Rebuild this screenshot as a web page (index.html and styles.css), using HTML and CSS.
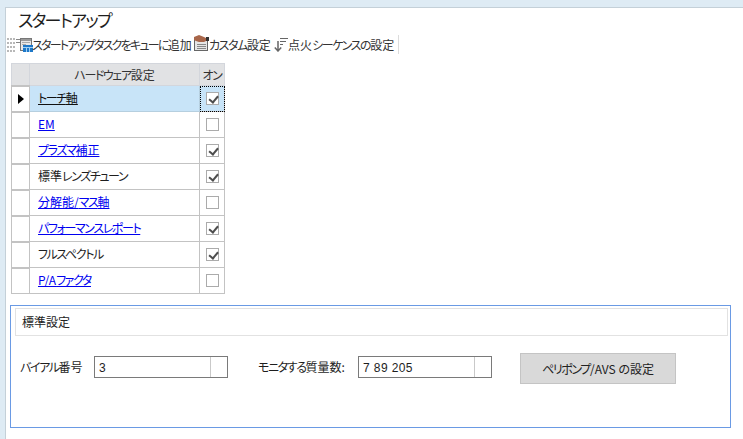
FILE: index.html
```html
<!DOCTYPE html>
<html lang="ja">
<head>
<meta charset="utf-8">
<title>スタートアップ</title>
<link rel="stylesheet" href="styles.css">
</head>
<body>
<main class="page">
  <h1 class="title">スタートアップ</h1>
  <div class="toolbar">
    <svg class="grip" width="13" height="18" viewBox="0 0 13 18"><g fill="#b8b8b8"><rect x="0" y="2" width="2" height="2"/><rect x="3" y="2" width="2" height="2"/><rect x="6" y="2" width="2" height="2"/><rect x="0" y="6" width="2" height="2"/><rect x="3" y="6" width="2" height="2"/><rect x="6" y="6" width="2" height="2"/><rect x="0" y="10" width="2" height="2"/><rect x="3" y="10" width="2" height="2"/><rect x="6" y="10" width="2" height="2"/><rect x="0" y="14" width="2" height="2"/><rect x="3" y="14" width="2" height="2"/><rect x="6" y="14" width="2" height="2"/></g><path d="M9 3.500h4M9 6.500h4" stroke="#888" stroke-width="1"/></svg>
    <svg class="ico-queue" width="13" height="14" viewBox="0 0 13 14"><rect x=".5" y=".5" width="11" height="12" fill="#e8e8e8" stroke="#777"/><rect x="1" y="1" width="10" height="2" fill="#999"/><path d="M2 4.500h8M2 6.500h4" stroke="#aaa"/><rect x="3" y="7" width="10" height="7" fill="#1e78c8"/><path d="M3 9.500h10M6.500 9v5M9.500 9v5" stroke="#9fd0f5"/></svg>
    <span class="tool tool-queue"><span class="k">スタートアップタスクをキューに</span>追加</span>
    <svg class="ico-custom" width="15" height="16" viewBox="0 0 15 16"><rect x=".5" y="4.500" width="13" height="11" fill="#e6e6e6" stroke="#666"/><path d="M3 9.500h9M3 11.500h9M3 13.500h9" stroke="#888"/><path d="M0 2l5-2 5 2 2 1v3l-2 1H5L2 6 0 5z" fill="#a8664a"/><rect x="12" y="2" width="3" height="4" fill="#333"/></svg>
    <span class="tool tool-custom"><span class="k">カスタム</span>設定</span>
    <svg class="ico-sort" width="14" height="14" viewBox="0 0 14 14"><path d="M4 3v10M.8 9.500L4 13l3.200-3.500" fill="none" stroke="#666" stroke-width="1.500"/><path d="M6 .5h8M6 3.500h6M6 6.500h3" stroke="#666"/></svg>
    <span class="tool tool-seq">点火<span class="k">シーケンスの</span>設定</span>
  </div>
  <table class="grid">
    <thead>
      <tr><th class="rh"></th><th class="name"><span class="k">ハードウェア</span>設定</th><th class="on"><span class="k">オン</span></th></tr>
    </thead>
    <tbody>
      <tr class="selected"><td class="rh"><span class="arrow"></span></td><td class="name"><a class="link-current" href="#"><span class="k">トーチ</span>軸</a></td><td class="on current"><span class="check checked"></span></td></tr>
      <tr><td class="rh"></td><td class="name"><a href="#">EM</a></td><td class="on"><span class="check"></span></td></tr>
      <tr><td class="rh"></td><td class="name"><a href="#"><span class="k">プラズマ</span>補正</a></td><td class="on"><span class="check checked"></span></td></tr>
      <tr><td class="rh"></td><td class="name">標準<span class="k">レンズチューン</span></td><td class="on"><span class="check checked"></span></td></tr>
      <tr><td class="rh"></td><td class="name"><a href="#">分解能/<span class="k">マス</span>軸</a></td><td class="on"><span class="check"></span></td></tr>
      <tr><td class="rh"></td><td class="name"><a href="#"><span class="k">パフォーマンスレポート</span></a></td><td class="on"><span class="check checked"></span></td></tr>
      <tr><td class="rh"></td><td class="name"><span class="k">フルスペクトル</span></td><td class="on"><span class="check checked"></span></td></tr>
      <tr><td class="rh"></td><td class="name"><a href="#">P/A<span class="k">ファクタ</span></a></td><td class="on"><span class="check"></span></td></tr>
    </tbody>
  </table>
  <section class="group">
    <div class="group-head">標準設定</div>
    <div class="group-body">
      <label class="lbl lbl-vial"><span class="k">バイアル</span>番号</label>
      <div class="field"><span class="val">3</span><span class="spin"></span></div>
      <label class="lbl lbl-mass"><span class="k">モニタする</span>質量数:</label>
      <div class="field"><span class="val">7 89 205</span><span class="spin"></span></div>
      <button class="btn" type="button"><span class="k">ペリポンプ</span>/AVS の設定</button>
    </div>
  </section>
</main>
</body>
</html>
```
FILE: styles.css
```css
* { box-sizing: border-box; }
html, body { margin: 0; height: 100%; overflow: hidden; }
body {
  display: flex;
  background: #deebf4;
  padding: 7px 0 0 5px;
  font-family: "Noto Sans CJK JP", "Liberation Sans", sans-serif;
  font-size: 12px;
  color: #1e1e1e;
  font-feature-settings: "palt";
}
.k { letter-spacing: -1.4px; }
.page {
  flex: 1;
  min-width: 0;
  overflow: hidden;
  background: #fff;
  border-top: 1px solid #c4d0d8;
  border-left: 1px solid #c4d0d8;
  padding-left: 4px;
}
.title {
  margin: 0 0 0 8px;
  height: 26px;
  font-size: 17px;
  font-weight: 400;
  line-height: 24px;
  letter-spacing: -1.7px;
}
.toolbar {
  display: flex;
  align-items: center;
  height: 19px;
  margin-top: 1px;
  width: 392px;
  margin-left: -3px;
  border-right: 1px solid #dcdcdc;
  color: #333;
}
.toolbar svg { flex: none; }
.tool { flex: none; line-height: 18px; white-space: nowrap; }
.tool-queue { width: 156px; margin-left: -1px; }
.tool-queue .k { letter-spacing: -1.75px; }
.ico-custom { margin-left: 6px; margin-top: -3px; }
.tool-custom { width: 60px; letter-spacing: -.3px; }
.ico-sort { margin-left: 5px; }
.tool-seq { width: 105px; }

.grid {
  margin: 9px 0 0 1px;
  border-collapse: collapse;
  table-layout: fixed;
  width: 213px;
}
.grid th, .grid td { border: 1px solid #c3c3c3; padding: 0; height: 26px; }
.grid th {
  background: #e1e2e4;
  border-color: #d3d6dc;
  height: 22px;
  font-weight: 400;
  color: #333;
  line-height: 18px;
}
.grid .rh { width: 18px; }
.grid td.rh { border-top-width: 2px; text-align: center; }
.grid .on { width: 25px; text-align: center; }
.grid th.name { width: 170px; text-align: center; }
.grid td.name { padding: 0 0 2px 8px; line-height: 22px; }
.grid a { color: #0000f0; text-decoration: underline; }
.grid a.link-current { color: #111; }
.selected td.name, .selected td.on { background: #c8e4f8; }
.selected td.name { border-color: #b6cfdf; }
.arrow {
  display: block;
  width: 0;
  height: 0;
  margin: 0 auto 0 6px;
  border-left: 6px solid #000;
  border-top: 5px solid transparent;
  border-bottom: 5px solid transparent;
}
.current { outline: 1px dotted #000; outline-offset: -1px; }
.check {
  display: block;
  position: relative;
  width: 13px;
  height: 13px;
  margin: -1px auto 0;
  border: 1px solid #ababab;
  background: #fff;
}
.checked::after {
  content: "";
  position: absolute;
  left: 2px;
  top: 1px;
  width: 7px;
  height: 4px;
  border-left: 2px solid #4d4d4d;
  border-bottom: 2px solid #4d4d4d;
  transform: rotate(-50deg) translate(-1px, 1px);
}

.group {
  margin-top: 11px;
  width: 721px;
  height: 123px;
  border: 1px solid #6a9ae4;
  padding: 2px 2px 0 4px;
}
.group-head {
  height: 28px;
  border: 1px solid #e2e2e2;
  padding-left: 6px;
  line-height: 26px;
  color: #222;
}
.group-body {
  display: flex;
  align-items: flex-start;
  padding: 17px 0 0 5px;
}
.lbl { line-height: 22px; white-space: nowrap; padding-top: 3px; }
.lbl-vial { width: 74px; }
.lbl-mass { width: 100px; margin-left: 30px; }
.field {
  display: flex;
  width: 134px;
  height: 22px;
  margin-top: 3px;
  border: 1px solid #7a7a7a;
  line-height: 22px;
  background: #fff;
}
.val { flex: 1; padding-left: 4px; letter-spacing: .4px; font-family: "Liberation Sans", "Noto Sans CJK JP", sans-serif; font-size: 12px; }
.spin { width: 17px; border-left: 1px solid #c9c9c9; }
.btn {
  width: 156px;
  height: 31px;
  margin-left: 28px;
  background: #d9d9d9;
  border: 1px solid #c4c4c4;
  color: #222;
  font: inherit;
  font-feature-settings: "palt";
  padding: 0;
}
```
